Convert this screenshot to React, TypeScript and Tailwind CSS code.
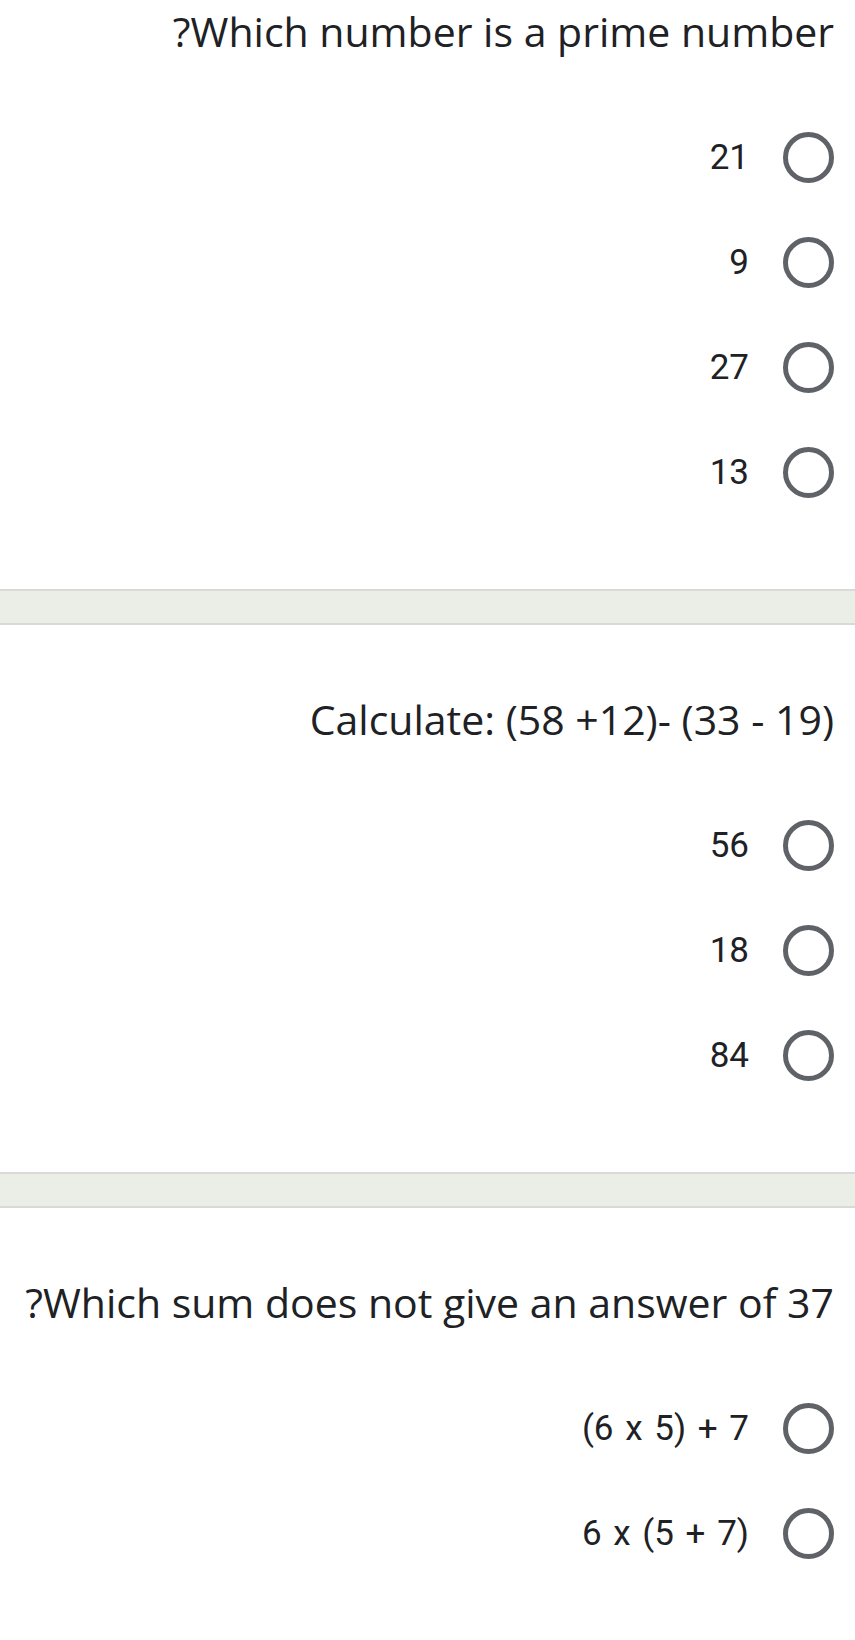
import React from "react";

function Radio() {
  return <div className="w-[51px] h-[51px] rounded-full border-[5px] border-[#5f6368] shrink-0" />;
}

function Option({ label }: { label: string }) {
  return (
    <div className="h-[105px] flex items-center justify-end gap-[34px]">
      <span
        className="text-[35px] leading-none text-[#202124] whitespace-nowrap"
        style={{ fontFamily: "Roboto, sans-serif", wordSpacing: "3px" }}
      >
        {label}
      </span>
      <Radio />
    </div>
  );
}

function Divider() {
  return <div className="h-[36px] bg-[#ebede7] border-y-2 border-[#d9dad8]" />;
}

function Title({ text }: { text: string }) {
  return (
    <div
      className="h-[50px] flex items-center justify-end text-[41px] leading-none text-[#202124] whitespace-nowrap"
      style={{ fontFamily: "'Open Sans', sans-serif" }}
    >
      {text}
    </div>
  );
}

export default function App() {
  return (
    <div className="w-[855px] h-[1640px] bg-white overflow-hidden">
      <div className="pr-[21px] pb-[64px]">
        <div className="pt-[6px] pb-[49px]">
          <Title text="?Which number is a prime number" />
        </div>
        <Option label="21" />
        <Option label="9" />
        <Option label="27" />
        <Option label="13" />
      </div>
      <Divider />
      <div className="pr-[21px] pb-[64px]">
        <div className="pt-[69px] pb-[49px]">
          <Title text="Calculate: (58 +12)- (33 - 19)" />
        </div>
        <Option label="56" />
        <Option label="18" />
        <Option label="84" />
      </div>
      <Divider />
      <div className="pr-[21px]">
        <div className="pt-[69px] pb-[49px]">
          <Title text="?Which sum does not give an answer of 37" />
        </div>
        <Option label="(6 x 5) + 7" />
        <Option label="6 x (5 + 7)" />
      </div>
    </div>
  );
}
